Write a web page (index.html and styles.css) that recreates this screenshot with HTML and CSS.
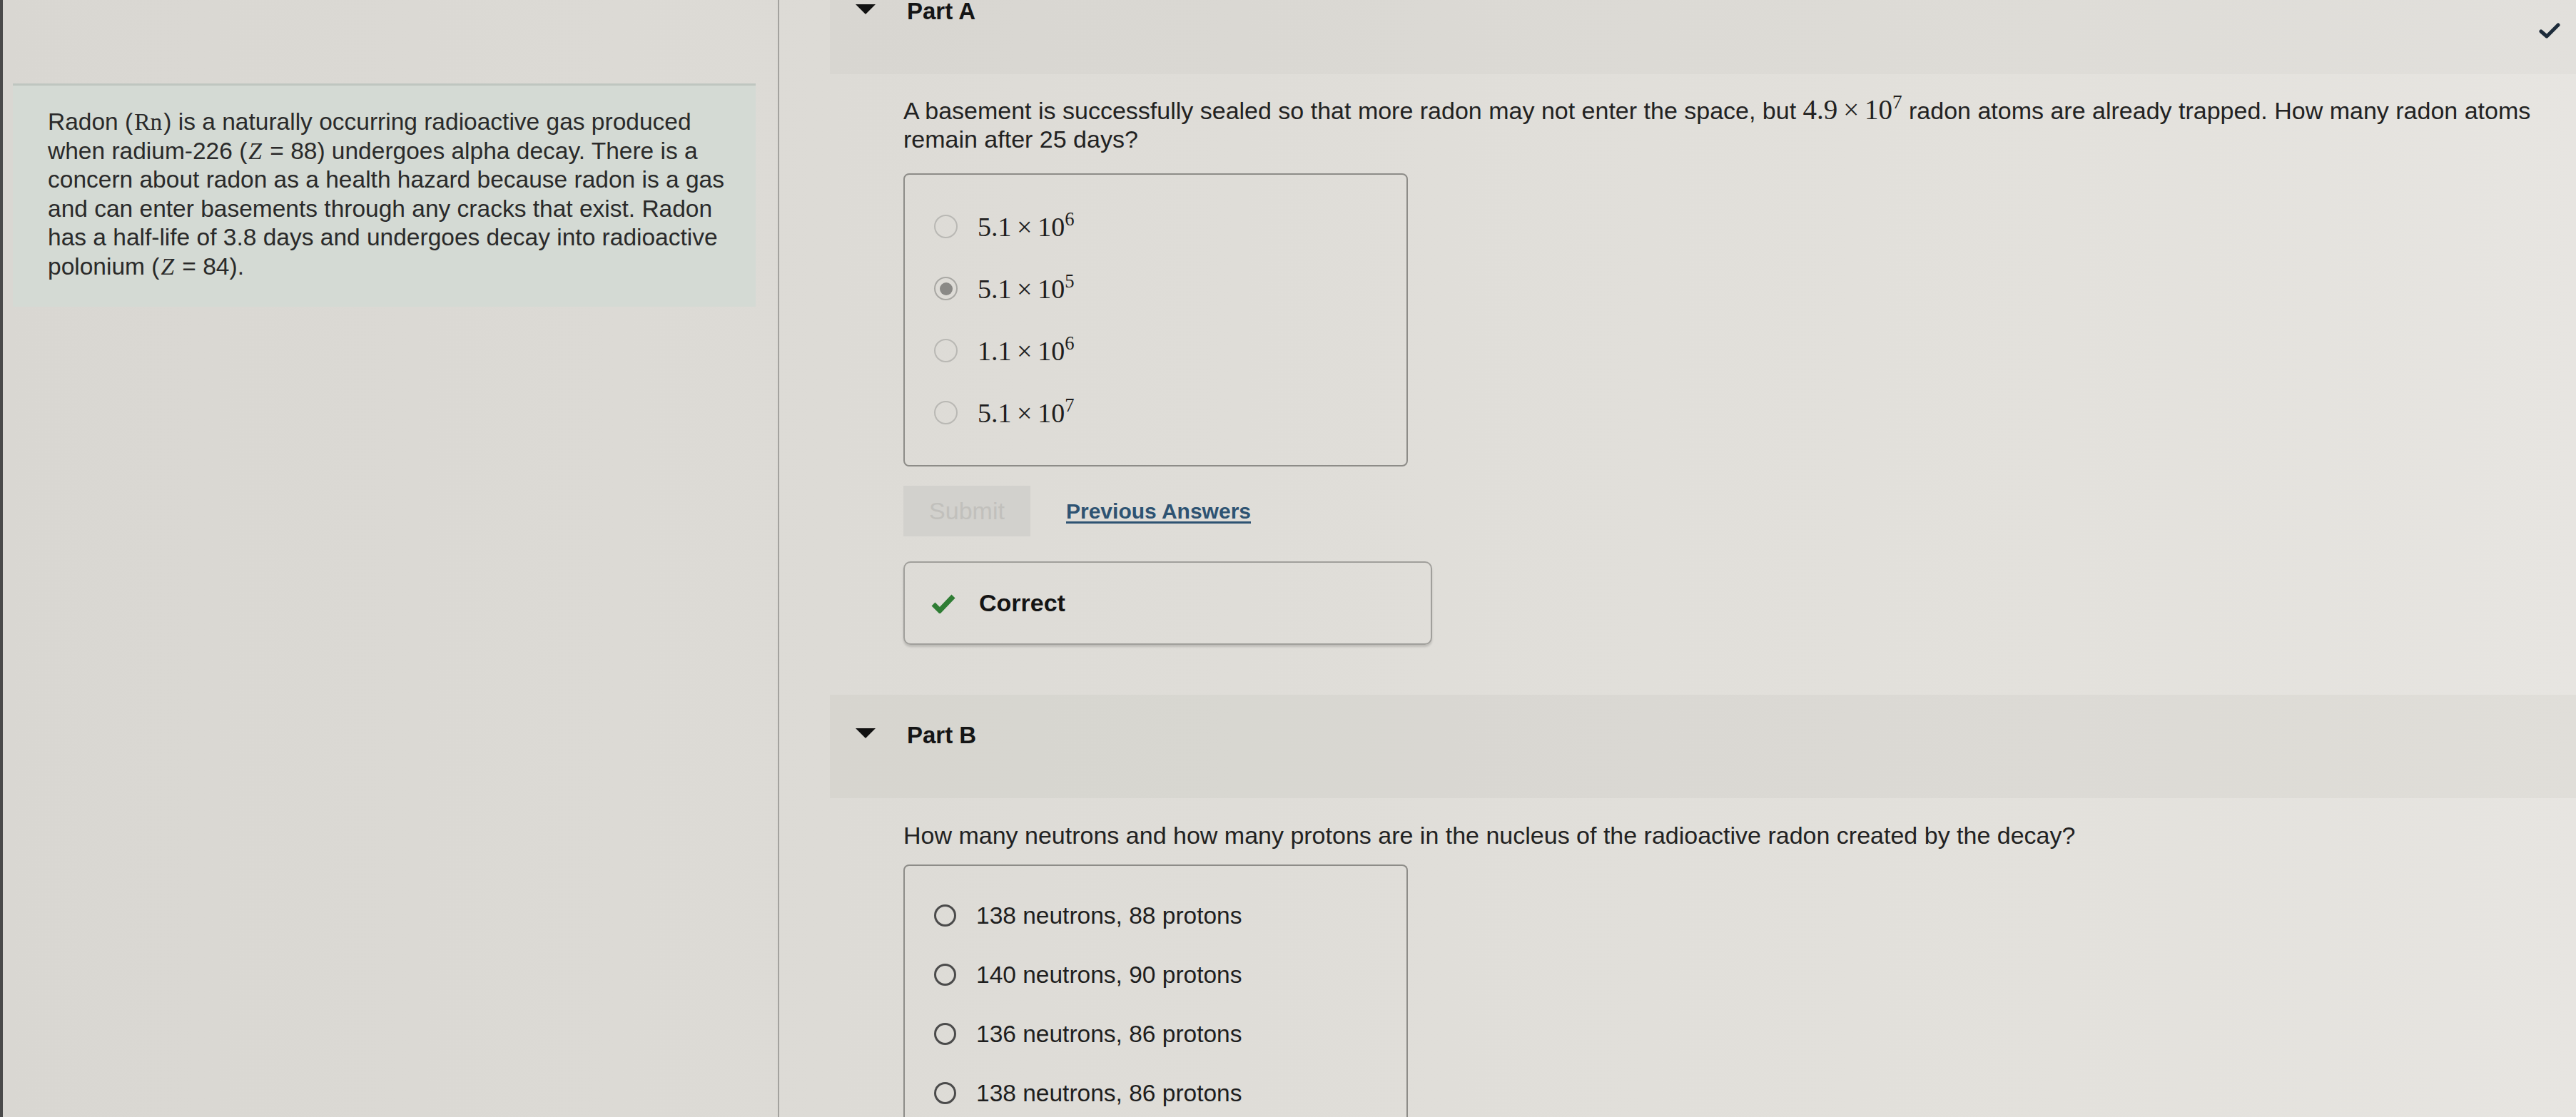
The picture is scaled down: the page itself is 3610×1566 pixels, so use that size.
FILE: index.html
```html
<!DOCTYPE html>
<html lang="en">
<head>
<meta charset="utf-8">
<title>Radon decay</title>
<link rel="stylesheet" href="styles.css">
</head>
<body>
<div class="page">
  <aside class="sidebar">
    <div class="passage">
      <p>Radon (<span class="m">Rn</span>) is a naturally occurring radioactive gas produced when radium-226 (<span class="m"><i>Z</i></span> = 88) undergoes alpha decay. There is a concern about radon as a health hazard because radon is a gas and can enter basements through any cracks that exist. Radon has a half-life of 3.8 days and undergoes decay into radioactive polonium (<span class="m"><i>Z</i></span> = 84).</p>
    </div>
  </aside>
  <main class="main">
    <section class="part part-a">
      <header class="part-head">
        <svg class="tri" viewBox="0 0 28 14" width="28" height="14"><polygon points="0,0 28,0 14,14" fill="#111"/></svg>
        <h2>Part A</h2>
      </header>
      <svg class="status-check" viewBox="0 0 30 22" width="30" height="22"><polyline points="3,12 11,19 27,3" fill="none" stroke="#1d2b3a" stroke-width="5" stroke-linecap="round" stroke-linejoin="round"/></svg>
      <div class="part-body">
        <p class="question">A basement is successfully sealed so that more radon may not enter the space, but <span class="m">4.9<span class="times">×</span>10<sup>7</sup></span> radon atoms are already trapped. How many radon atoms remain after 25 days?</p>
        <div class="choices math-choices">
          <div class="choice"><span class="radio"></span><span class="m">5.1<span class="times">×</span>10<sup>6</sup></span></div>
          <div class="choice"><span class="radio checked"></span><span class="m">5.1<span class="times">×</span>10<sup>5</sup></span></div>
          <div class="choice"><span class="radio"></span><span class="m">1.1<span class="times">×</span>10<sup>6</sup></span></div>
          <div class="choice"><span class="radio"></span><span class="m">5.1<span class="times">×</span>10<sup>7</sup></span></div>
        </div>
        <div class="actions">
          <button class="submit" disabled>Submit</button>
          <a class="prev" href="#">Previous Answers</a>
        </div>
        <div class="feedback">
          <svg class="ok" viewBox="0 0 36 28" width="36" height="28"><polyline points="4,15 13,24 32,4" fill="none" stroke="#2f7d34" stroke-width="7" stroke-linejoin="miter"/></svg>
          <span>Correct</span>
        </div>
      </div>
    </section>
    <section class="part part-b">
      <header class="part-head">
        <svg class="tri" viewBox="0 0 28 14" width="28" height="14"><polygon points="0,0 28,0 14,14" fill="#111"/></svg>
        <h2>Part B</h2>
      </header>
      <div class="part-body">
        <p class="question">How many neutrons and how many protons are in the nucleus of the radioactive radon created by the decay?</p>
        <div class="choices text-choices">
          <div class="choice"><span class="radio dark"></span><span>138 neutrons, 88 protons</span></div>
          <div class="choice"><span class="radio dark"></span><span>140 neutrons, 90 protons</span></div>
          <div class="choice"><span class="radio dark"></span><span>136 neutrons, 86 protons</span></div>
          <div class="choice"><span class="radio dark"></span><span>138 neutrons, 86 protons</span></div>
        </div>
      </div>
    </section>
  </main>
</div>
</body>
</html>
```
FILE: styles.css
```css
* { box-sizing: border-box; }
html, body { margin: 0; padding: 0; height: 100%; overflow: hidden; }
body {
  font-family: "Liberation Sans", Arial, sans-serif;
  color: #222;
  background: linear-gradient(90deg, #d9d7d2 0%, #dedcd7 40%, #e3e1dc 80%, #e7e5e1 100%);
  border-left: 4px solid #4a4a4a;
}
.page {
  display: grid;
  grid-template-columns: 1088px 1fr;
  min-height: 100%;
}
.sidebar {
  border-right: 2px solid #a3a29e;
  padding: 117px 0 0 14px;
}
.passage {
  width: 1041px;
  background: #d4dad4;
  border-top: 3px solid #bfc6c0;
  padding: 31px 33px 36px 49px;
}
.passage p {
  margin: 0;
  font-size: 33.5px;
  line-height: 40.5px;
  color: #2a2a2a;
}
.m { font-family: "Liberation Serif", "Times New Roman", serif; }
.passage .m { margin: 0 2px; line-height: 1; }
.m i { font-style: italic; }
.times { margin: 0 0.2em; }
.m sup { font-size: 70%; vertical-align: 0.55em; line-height: 0; }

.main { padding-left: 71px; position: relative; }
.part { position: relative; }
.part-head {
  display: flex;
  align-items: center;
  gap: 44px;
  height: 145px;
  padding: 40px 0 71px 36px;
  background: rgba(120, 115, 105, 0.06);
}
.part-a .part-head { margin-top: -41px; background: rgba(120, 115, 105, 0.045); }
.part-head h2 {
  margin: 0;
  font-size: 33px;
  line-height: 34px;
  font-weight: bold;
  color: #151515;
}
.tri { display: block; margin-top: -6px; }
.status-check { position: absolute; top: 73px; right: 22px; }
.part-body { padding: 30px 40px 0 103px; }
.part-b .part-body { padding-top: 32px; }
.question {
  margin: 0;
  font-size: 34px;
  line-height: 40px;
  color: #222;
}
.question .m { font-size: 39px; line-height: 1; }
.choices {
  width: 707px;
  border: 2px solid #8d8c88;
  border-radius: 8px;
  margin-top: 28px;
  padding: 29px 0 30px 41px;
}
.text-choices { margin-top: 21px; padding-top: 28px; height: 400px; border-bottom: none; border-radius: 8px 8px 0 0; }
.choice {
  display: flex;
  align-items: center;
  gap: 28px;
  height: 87px;
}
.text-choices .choice { height: 83px; font-size: 33.5px; color: #1e1e1e; }
.math-choices .m { font-size: 38px; color: #1e1e1e; }
.radio {
  width: 33px;
  height: 33px;
  border-radius: 50%;
  border: 2px solid #b9b8b4;
  flex: none;
  display: flex;
  align-items: center;
  justify-content: center;
}
.radio.checked { border-color: #a9a8a4; }
.radio.checked::after {
  content: "";
  width: 18px;
  height: 18px;
  border-radius: 50%;
  background: #8a8986;
}
.radio.dark { border: 3px solid #4b4b4b; width: 31px; height: 31px; }
.actions {
  display: flex;
  align-items: center;
  gap: 50px;
  margin-top: 27px;
}
.submit {
  width: 178px;
  height: 71px;
  border: none;
  background: #d2d1cd;
  color: #c1c0bc;
  font-family: "Liberation Sans", Arial, sans-serif;
  font-size: 34px;
  padding: 0;
}
.prev {
  font-size: 30px;
  font-weight: bold;
  color: #2e5372;
  text-decoration: underline;
  text-decoration-thickness: 3px;
  text-underline-offset: 4px;
}
.feedback {
  width: 741px;
  height: 117px;
  margin-top: 35px;
  border: 2px solid #a09f9b;
  border-radius: 10px;
  box-shadow: 0 3px 3px rgba(0, 0, 0, 0.15);
  display: flex;
  align-items: center;
  gap: 32px;
  padding-left: 36px;
}
.feedback span {
  font-size: 34px;
  font-weight: bold;
  color: #141414;
}
.part-b { margin-top: 70px; }
```
